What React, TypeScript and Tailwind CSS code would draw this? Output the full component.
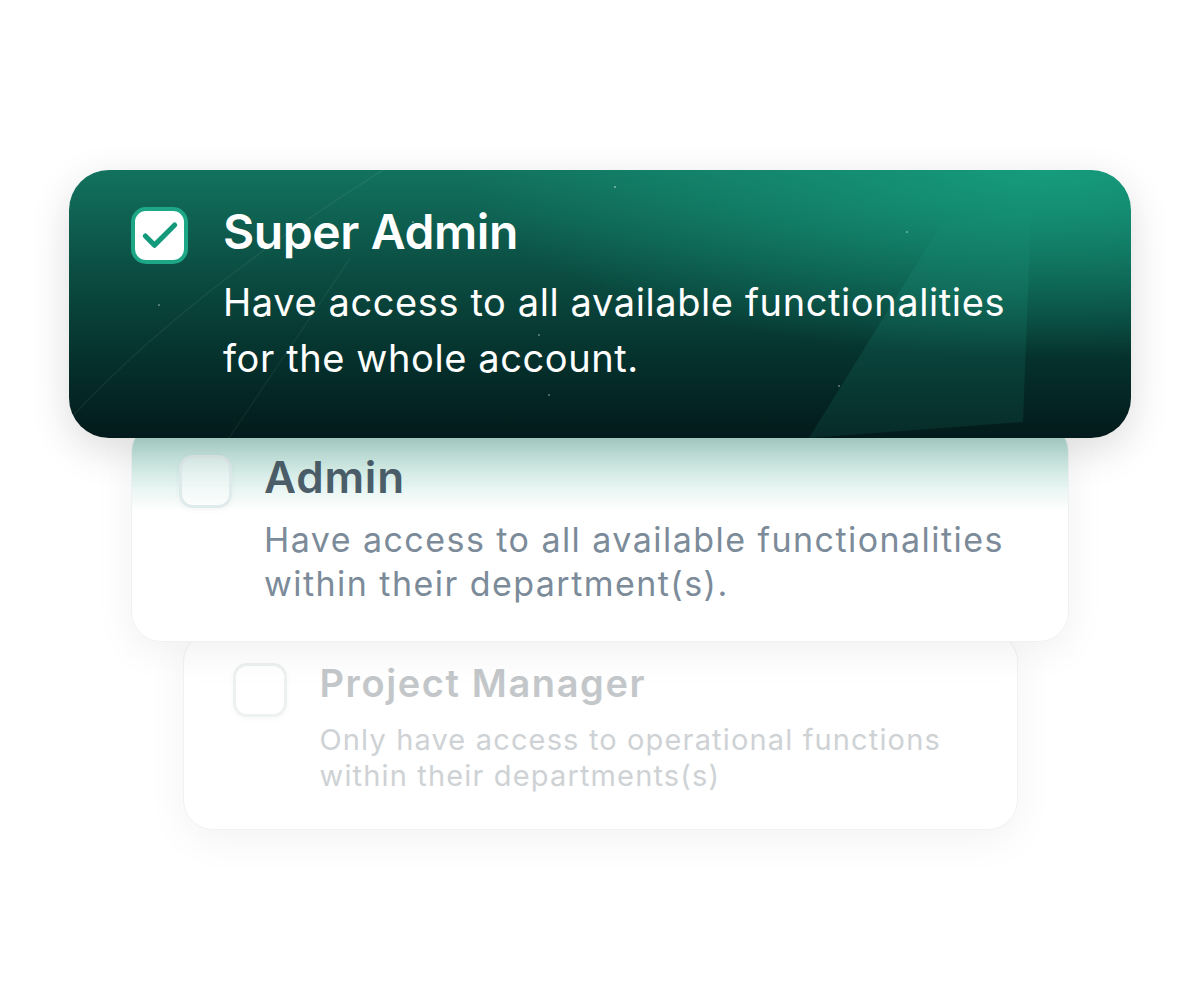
import { Check } from "lucide-react";

const font = { fontFamily: "Inter, 'Noto Sans', sans-serif" };

function SuperAdminCard() {
  return (
    <div className="relative z-30 w-[1062px] h-[268px] rounded-[40px] overflow-hidden shadow-[0_12px_40px_rgba(0,0,0,0.14)] bg-[radial-gradient(ellipse_55%_70%_at_92%_0%,rgba(22,160,128,0.9)_0%,rgba(22,160,128,0)_100%),linear-gradient(180deg,#12725e_0%,#0b4d42_38%,#05302c_72%,#031a1b_100%)]">
      <svg className="absolute inset-0" width="1062" height="268" viewBox="0 0 1062 268" fill="none">
        <defs>
          <linearGradient id="shard" x1="0" y1="0" x2="0" y2="1">
            <stop offset="0" stopColor="rgba(40,190,160,0.02)" />
            <stop offset="0.35" stopColor="rgba(40,190,160,0.12)" />
            <stop offset="1" stopColor="rgba(40,190,160,0.10)" />
          </linearGradient>
        </defs>
        <path d="M740 268 L875 50 L962 40 L954 252 Z" fill="url(#shard)" />
        <path d="M0 250 Q120 120 330 -10" stroke="rgba(255,255,255,0.06)" strokeWidth="1.5" />
        <path d="M160 268 Q240 150 280 90" stroke="rgba(255,255,255,0.05)" strokeWidth="1.5" />
        <circle cx="546" cy="17" r="1" fill="rgba(255,255,255,0.5)" />
        <circle cx="344" cy="52" r="1" fill="rgba(255,255,255,0.4)" />
        <circle cx="838" cy="62" r="1" fill="rgba(255,255,255,0.4)" />
        <circle cx="90" cy="135" r="1" fill="rgba(255,255,255,0.4)" />
        <circle cx="470" cy="165" r="1" fill="rgba(255,255,255,0.4)" />
        <circle cx="480" cy="225" r="1" fill="rgba(255,255,255,0.4)" />
        <circle cx="770" cy="216" r="1" fill="rgba(255,255,255,0.4)" />
      </svg>
      <div className="relative flex gap-[35px] pl-[62px] pt-[37px]">
        <div className="w-[57px] h-[57px] shrink-0 rounded-[15px] bg-white border-[4px] border-[#1ea787] flex items-center justify-center">
          <Check className="w-[44px] h-[44px] text-[#13997b]" strokeWidth={2.8} />
        </div>
        <div className="text-white" style={font}>
          <div className="text-[48px] leading-[54px] font-semibold tracking-[-0.4px] -mt-[2px]">Super Admin</div>
          <div className="text-[38px] leading-[56px] font-normal tracking-[0.6px] mt-[15px]">
            Have access to all available functionalities
            <br />
            for the whole account.
          </div>
        </div>
      </div>
    </div>
  );
}

function AdminCard() {
  return (
    <div className="relative z-20 -mt-[16px] w-[938px] h-[220px] rounded-[30px] border border-[#eef2f2] shadow-[0_10px_40px_rgba(0,0,0,0.06)] bg-[linear-gradient(180deg,#9fd4c7_0px,#c4e6de_30px,#ffffff_88px)]">
      <div className="flex gap-[34px] pl-[47px] pt-[32px]">
        <div className="w-[53px] h-[53px] shrink-0 rounded-[14px] bg-white/40 border-[3px] border-[#dfeaea] shadow-[0_2px_6px_rgba(0,0,0,0.04)]" />
        <div className="-ml-[2px]" style={font}>
          <div className="text-[44px] leading-[48px] font-semibold text-[#4b5e69] tracking-[0.8px] -mt-[2px]">Admin</div>
          <div className="text-[34px] leading-[44px] font-normal text-[#7c8b99] tracking-[1.45px] mt-[17px]">
            Have access to all available functionalities
            <br />
            within their department(s).
          </div>
        </div>
      </div>
    </div>
  );
}

function ProjectManagerCard() {
  return (
    <div className="relative z-10 -mt-[10px] w-[835px] h-[198px] rounded-[30px] bg-white border border-[#f0f2f2] shadow-[0_10px_40px_rgba(0,0,0,0.05)]">
      <div className="flex gap-[34px] pl-[49px] pt-[30px]">
        <div className="w-[54px] h-[54px] shrink-0 rounded-[14px] bg-white border-[3px] border-[#eef1f1] shadow-[0_2px_6px_rgba(0,0,0,0.03)]" />
        <div className="-ml-[1px]" style={font}>
          <div className="text-[38px] leading-[44px] font-semibold text-[#c3c7ca] tracking-[1.6px] -mt-[2px]">Project Manager</div>
          <div className="text-[29px] leading-[36px] font-normal text-[#ced2d5] tracking-[1.15px] mt-[17px]">
            Only have access to operational functions
            <br />
            within their departments(s)
          </div>
        </div>
      </div>
    </div>
  );
}

export default function App() {
  return (
    <div className="w-[1200px] h-[1001px] bg-white flex flex-col items-center pt-[170px]">
      <SuperAdminCard />
      <AdminCard />
      <ProjectManagerCard />
    </div>
  );
}
